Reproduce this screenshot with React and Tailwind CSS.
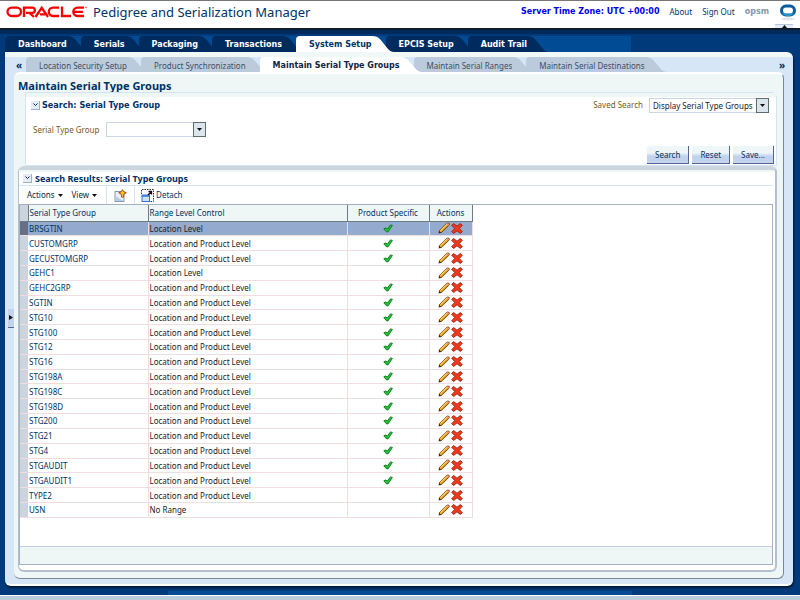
import React, { useState } from 'react';

const mainTabs = ['Dashboard', 'Serials', 'Packaging', 'Transactions', 'System Setup', 'EPCIS Setup', 'Audit Trail'];

const subTabs = [
  'Location Security Setup',
  'Product Synchronization',
  'Maintain Serial Type Groups',
  'Maintain Serial Ranges',
  'Maintain Serial Destinations',
];

const BOTH = 'Location and Product Level';

const groups = [
  { name: 'BRSGTIN', level: 'Location Level', product: true },
  { name: 'CUSTOMGRP', level: BOTH, product: true },
  { name: 'GECUSTOMGRP', level: BOTH, product: true },
  { name: 'GEHC1', level: 'Location Level', product: false },
  { name: 'GEHC2GRP', level: BOTH, product: true },
  { name: 'SGTIN', level: BOTH, product: true },
  { name: 'STG10', level: BOTH, product: true },
  { name: 'STG100', level: BOTH, product: true },
  { name: 'STG12', level: BOTH, product: true },
  { name: 'STG16', level: BOTH, product: true },
  { name: 'STG198A', level: BOTH, product: true },
  { name: 'STG198C', level: BOTH, product: true },
  { name: 'STG198D', level: BOTH, product: true },
  { name: 'STG200', level: BOTH, product: true },
  { name: 'STG21', level: BOTH, product: true },
  { name: 'STG4', level: BOTH, product: true },
  { name: 'STGAUDIT', level: BOTH, product: true },
  { name: 'STGAUDIT1', level: BOTH, product: true },
  { name: 'TYPE2', level: BOTH, product: false },
  { name: 'USN', level: 'No Range', product: false },
];

const OracleLogo = () => (
  <svg width="81" height="12" viewBox="0 0 81 12" fill="none" stroke="#f80000" strokeWidth="2.3" role="img" aria-label="Oracle">
    <rect x="1.5" y="1.6" width="13.5" height="8.4" rx="4.2" />
    <path d="M18 11V1.600h8.300a2.500 2.500 0 0 1 0 5.200H20M23.500 7l4.500 4" />
    <path d="M29.500 11l6.200-9.200L42 11M34 8.300h5" />
    <path d="M53 1.600h-6a4.200 4.200 0 0 0 0 8.400h6" />
    <path d="M56 .5V10h9" />
    <path d="M78 1.600h-6.500a4.200 4.200 0 0 0 0 8.400H78M68 5.800h9" />
    <circle cx="80" cy="1.500" r="0.500" strokeWidth="0.600" />
  </svg>
);

const BrandRing = () => (
  <svg width="18" height="17" viewBox="0 0 18 17" aria-hidden="true">
    <ellipse cx="9" cy="15" rx="6.500" ry="1.500" fill="#dfe6ee" />
    <rect x="2.500" y="2" width="13" height="9" rx="4.500" fill="none" stroke="#0b5c9e" strokeWidth="3" />
    <path d="M4 9.500Q9 13 14 9.500" fill="none" stroke="#2fa4d8" strokeWidth="1.500" />
  </svg>
);

const CheckIcon = () => (
  <svg width="10" height="9" viewBox="0 0 10 9" className="mx-auto" role="img" aria-label="Yes">
    <path d="M.8 4.800L3 3.900l1.200 1.300L7.500.9l1.900.5L5 7.900H3.600z" fill="#22c436" stroke="#0b7a1c" strokeWidth="0.900" />
  </svg>
);

const PencilIcon = () => (
  <svg width="12" height="12" viewBox="0 0 12 12" strokeLinecap="round" aria-hidden="true">
    <path d="M2.600 9.400L9.900 2.300" stroke="#6b3c08" strokeWidth="3.400" />
    <path d="M2.800 9L9.700 2.300" stroke="#f5a81c" strokeWidth="2.200" />
    <path d="M2.800 8.400L8.800 2.500" stroke="#ffe58a" strokeWidth="0.900" />
    <path d="M9.600 2.100l.5.500" stroke="#e8948a" strokeWidth="1.600" />
    <path d="M.5 11.500l.7-2.300 1.700 1.600z" fill="#222" />
  </svg>
);

const DeleteIcon = () => (
  <svg width="12" height="11" viewBox="0 0 12 11" aria-hidden="true">
    <path d="M.7 2.300L2.700.6 6 3.200 9.300.6l2 1.700-3 3.200 3 3.200-2 1.700L6 7.800l-3.300 2.600-2-1.700 3-3.200z" fill="#f03a1c" stroke="#a01a08" strokeWidth="0.900" />
  </svg>
);

const NewIcon = () => (
  <svg width="13" height="13" viewBox="0 0 13 13" aria-hidden="true">
    <rect x="1" y="2.500" width="9" height="10" fill="#eaf1fb" stroke="#8497b5" />
    <path d="M1.500 12V7l8 5z" fill="#b9cbe6" />
    <path d="M8.500.600l1.400 2.200 2.500 1-2.500 1.200-.5 3.200H7.600l-.4-3.200-2.500-1.200 2.500-1z" fill="#ffc52c" stroke="#a8440c" strokeWidth="0.900" />
  </svg>
);

const DetachIcon = () => (
  <svg width="13" height="13" viewBox="0 0 13 13" aria-hidden="true">
    <path d="M.5 5V.500h12V12.500H9" fill="none" stroke="#333" strokeDasharray="1.500 1" />
    <rect x="1" y="6" width="7.500" height="6.500" fill="#cfe2fa" stroke="#2f73d8" />
    <path d="M1 7h7.500" stroke="#2f73d8" strokeWidth="1.500" />
    <path d="M7 6L10 3M7.500 2.500h3v3" fill="none" stroke="#111" strokeWidth="1.300" />
  </svg>
);

const Caret = () => (
  <svg width="5" height="3" viewBox="0 0 5 3" aria-hidden="true">
    <path d="M0 0h5L2.500 3z" fill="#111" />
  </svg>
);

const Disclosure = ({ label, open, onClick }) => (
  <button
    aria-label={label}
    aria-expanded={open}
    onClick={onClick}
    className="flex h-[9px] w-[9px] items-center justify-center border-r border-b border-[#9fb0c8] bg-[#e4ecf5]"
  >
    <svg width="5" height="4" viewBox="0 0 5 4" fill="none" stroke="#10253f" aria-hidden="true">
      <path d="M.5.500l2 2 2-2" />
    </svg>
  </button>
);

const TabTail = ({ className }) => (
  <svg viewBox="0 0 22 15" preserveAspectRatio="none" className={`-mr-2 h-full w-[22px] ${className}`} aria-hidden="true">
    <path d="M0 0Q6 0 9 4L15 11Q18 15 22 15H0z" fill="currentColor" />
  </svg>
);

const DropDown = ({ id, value, options, className }) => (
  <div className={`relative flex ${className}`}>
    <select
      id={id}
      defaultValue={value}
      className="h-[15px] w-full appearance-none border border-[#c9d7e4] bg-white pl-[3px] text-[8px] leading-[13px] text-[#222]"
    >
      {options.map((o) => (
        <option key={o}>{o}</option>
      ))}
    </select>
    <span className="pointer-events-none absolute inset-y-0 right-0 flex w-[13px] items-center justify-center border border-[#5d6f6a] bg-[#dce4ec]">
      <Caret />
    </span>
  </div>
);

const PushButton = ({ children }) => (
  <button className="h-[18px] border-r border-b border-[#56688f] bg-linear-to-b from-[#eef6f8] from-40% to-[#c3d3ee] to-60% px-2 text-[8px] text-[#003366]">
    {children}
  </button>
);

export default function App() {
  const [mainTab, setMainTab] = useState('System Setup');
  const [subTab, setSubTab] = useState('Maintain Serial Type Groups');
  const [searchOpen, setSearchOpen] = useState(true);
  const [resultsOpen, setResultsOpen] = useState(true);
  const [selected, setSelected] = useState('BRSGTIN');

  return (
    <div className="flex min-h-screen flex-col bg-[#003a7b] font-['Noto_Sans',sans-serif] text-[8px] leading-[12px] text-[#003366]">
      {/* Branding bar */}
      <header className="relative flex h-[28px] items-center border-t border-[#777] bg-white pb-[5px] pl-[6px]">
        <OracleLogo />
        <h1 className="ml-[6px] text-[13px] leading-[20px]">Pedigree and Serialization Manager</h1>
        <div className="ml-auto flex items-center gap-[10px] pr-[3px]">
          <span className="font-['DejaVu_Sans',sans-serif] font-bold text-[#0000ee]">Server Time Zone: UTC +00:00</span>
          <a href="#about">About</a>
          <a href="#signout">Sign Out</a>
          <span className="font-['DejaVu_Sans',sans-serif] font-bold text-[#8b98a6]">opsm</span>
          <BrandRing />
        </div>
        <button aria-label="Collapse header" className="absolute right-[7px] bottom-0 flex h-[4px] w-[18px] justify-center border-t border-[#b5c7dc] bg-[#e4edf6]">
          <svg width="5" height="3" viewBox="0 0 5 3" aria-hidden="true">
            <path d="M0 3h5L2.500 0z" fill="#111" />
          </svg>
        </button>
      </header>

      {/* Main tabs */}
      <nav className="flex h-6 flex-col border-t-2 border-[#111c2b] font-['DejaVu_Sans',sans-serif]">
        <div className="h-[4px] bg-[#002a5c]" />
        <div className="mt-[2px] flex min-h-0 flex-1 pl-[5px]">
          <div className="flex bg-[#004b93] pr-[90px]">
            {mainTabs.map((tab) => (
              <button
                key={tab}
                onClick={() => setMainTab(tab)}
                className={`relative flex items-stretch font-bold ${tab === mainTab ? 'z-10 text-[#003366]' : 'text-white'}`}
              >
                <span className={`rounded-tl-sm pt-[3px] pl-[13px] ${tab === mainTab ? 'bg-white' : 'bg-[#002b5e]'}`}>{tab}</span>
                <TabTail className={tab === mainTab ? 'text-white' : 'text-[#002b5e]'} />
              </button>
            ))}
          </div>
        </div>
      </nav>

      {/* Page frame */}
      <div className="mr-[7px] ml-[5px] flex flex-1 flex-col rounded-tr-md rounded-b-md border-t-[5px] border-b-2 border-t-[#f0f8f8] border-b-white bg-[#d6e6f7] shadow-[1px_2px_2px_#001a3d]">
        <nav className="flex h-[15px] items-stretch pr-[8px] pl-[11px]">
          <button aria-label="Previous tabs" className="mr-[4px] w-[6px] text-[10px] font-bold">«</button>
          {subTabs.map((tab) => (
            <button
              key={tab}
              onClick={() => setSubTab(tab)}
              className={`relative flex items-stretch ${tab === subTab ? "z-10 font-['DejaVu_Sans',sans-serif] font-bold text-[#10253f]" : 'text-[#3d4f66]'}`}
            >
              <span className={`rounded-tl-sm pt-[3px] pl-[13px] ${tab === subTab ? 'bg-white' : 'bg-[#bccbdc]'}`}>{tab}</span>
              <TabTail className={tab === subTab ? 'text-white' : 'text-[#bccbdc]'} />
            </button>
          ))}
          <button aria-label="More tabs" className="ml-auto w-[6px] text-[10px] font-bold">»</button>
        </nav>

        <div className="flex flex-1">
          <div className="flex w-[9px] items-center justify-end pb-5">
            <button aria-label="Expand side pane" className="flex h-[19px] w-[6px] items-center justify-center border-b border-[#56688f] bg-[#c3d3ee]">
              <svg width="4" height="5" viewBox="0 0 4 5" aria-hidden="true">
                <path d="M0 0v5l4-2.500z" fill="#111" />
              </svg>
            </button>
          </div>

          <main className="mr-[9px] mb-[5px] flex flex-1 flex-col rounded-md border-t-2 border-r border-b border-t-white border-r-[#7b8794] border-b-[#7b8794] bg-[#eef6f6] pr-[6px] pb-[6px] pl-[4px]">
            <h2 className="pt-[7px] pb-px text-[11px] leading-[10px] font-bold">Maintain Serial Type Groups</h2>

            {/* Search criteria */}
            <section className="ml-[7px] flex min-h-[74px] flex-col rounded-tr-md border border-[#d3e4f5] bg-white">
              <div className="flex h-5 items-center border-t-4 border-[#eef6f6] pr-[7px] pl-[5px]">
                <Disclosure label="Toggle search" open={searchOpen} onClick={() => setSearchOpen(!searchOpen)} />
                <h3 className="ml-[2px] font-['DejaVu_Sans_Condensed',sans-serif] text-[9px] font-bold">Search: Serial Type Group</h3>
                <label htmlFor="saved" className="mr-[6px] ml-auto text-[#7a5a1e]">Saved Search</label>
                <DropDown id="saved" value="Display Serial Type Groups" options={['Display Serial Type Groups']} className="w-[120px]" />
              </div>
              {searchOpen && (
                <>
                  <div className="mt-[9px] flex items-center pl-[7px]">
                    <label htmlFor="group" className="mr-[7px] text-[#7a5a1e]">Serial Type Group</label>
                    <DropDown id="group" value="" options={['', ...groups.map((g) => g.name)]} className="w-[100px]" />
                  </div>
                  <div className="mt-auto flex justify-end gap-[3px] pr-[2px] pb-px">
                    <PushButton>Search</PushButton>
                    <PushButton>Reset</PushButton>
                    <PushButton>Save...</PushButton>
                  </div>
                </>
              )}
            </section>

            {/* Search results */}
            <section className="flex flex-1 flex-col rounded-md border-t-4 border-r-2 border-b-2 border-l border-t-[#ccd5dd] border-r-[#b4bfd4] border-b-[#b4bfd4] border-l-[#b4bfd4] bg-white pr-[2px] pb-[5px]">
              <div className="flex h-4 items-center border-t-2 border-b border-t-[#eef6f6] border-b-[#d3e4f5] pl-[4px]">
                <Disclosure label="Toggle search results" open={resultsOpen} onClick={() => setResultsOpen(!resultsOpen)} />
                <h3 className="ml-[3px] text-[9px] font-bold">Search Results: Serial Type Groups</h3>
              </div>
              {resultsOpen && (
                <>
                  <div className="flex h-[18px] items-center text-[#10253f]">
                    <button className="flex items-center gap-[3px] pl-[8px]">Actions <Caret /></button>
                    <button className="flex items-center gap-[3px] pl-[9px]">View <Caret /></button>
                    <span className="ml-[9px] h-full w-px bg-[#d3e4f5]" />
                    <button aria-label="Create" className="px-[7px]"><NewIcon /></button>
                    <span className="h-full w-px bg-[#d3e4f5]" />
                    <button className="flex items-center gap-[2px] pl-[6px] text-[#003366]"><DetachIcon /> Detach</button>
                  </div>
                  <div className="flex flex-1 flex-col border border-[#a3b1c2]">
                    <table className="h-[313px] w-[452px] table-fixed border-collapse text-left leading-[11px]">
                      <colgroup>
                        <col className="w-[8px]" />
                        <col className="w-[120px]" />
                        <col className="w-[199px]" />
                        <col className="w-[82px]" />
                        <col className="w-[43px]" />
                      </colgroup>
                      <thead>
                        <tr className="h-[16px] border-b border-[#6d7b85] bg-[#eef6f6]">
                          <th aria-label="Select" className="border-r border-[#6d7b85] bg-[#ccd5dd] p-0" />
                          <th className="border-r border-[#6d7b85] p-0 pl-px font-normal">Serial Type Group</th>
                          <th className="border-r border-[#6d7b85] p-0 pl-px font-normal">Range Level Control</th>
                          <th className="border-r border-[#6d7b85] p-0 text-center font-normal">Product Specific</th>
                          <th className="border-r border-[#6d7b85] p-0 text-center font-normal">Actions</th>
                        </tr>
                      </thead>
                      <tbody>
                        {groups.map((g) => (
                          <tr
                            key={g.name}
                            onClick={() => setSelected(g.name)}
                            className={`border-b border-[#f0dede] ${g.name === selected ? 'bg-[#94aace]' : ''}`}
                          >
                            <td className={`p-0 ${g.name === selected ? 'bg-[#666f86]' : 'bg-[#ccd5dd]'}`} />
                            <td className="border-r border-[#f0dede] p-0 pl-px">
                              <a href={`#${g.name}`}>{g.name}</a>
                            </td>
                            <td className="border-r border-[#f0dede] p-0 pl-px text-[#222]">{g.level}</td>
                            <td className="border-r border-[#f0dede] p-0">{g.product && <CheckIcon />}</td>
                            <td className="border-r border-[#f0dede] p-0">
                              <div className="flex items-center justify-center gap-px">
                                <button aria-label={`Edit ${g.name}`}><PencilIcon /></button>
                                <button aria-label={`Delete ${g.name}`}><DeleteIcon /></button>
                              </div>
                            </td>
                          </tr>
                        ))}
                      </tbody>
                    </table>
                    <div className="mt-auto h-[18px] border-t border-[#c5d0dc] bg-[#eef6f6]" />
                  </div>
                </>
              )}
            </section>
          </main>
        </div>
      </div>

      <footer className="pt-[5px]">
        <div className="ml-[21%] h-[4px] w-[58%] bg-[#004b93]" />
        <div className="h-[5px] border-t border-white bg-[#bccbdc]" />
      </footer>
    </div>
  );
}
